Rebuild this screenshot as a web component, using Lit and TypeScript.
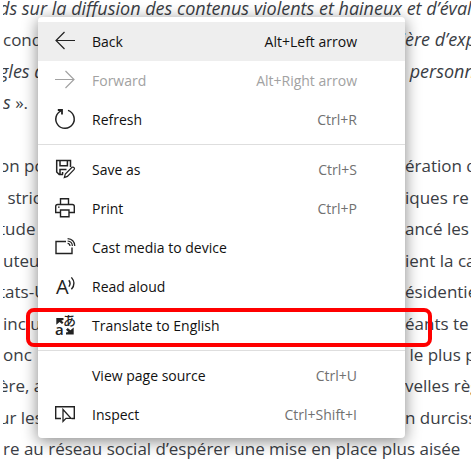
import { LitElement, html, css, svg, nothing } from "lit";
import { customElement } from "lit/decorators.js";
import { classMap } from "lit/directives/class-map.js";

const icons = {
  back: svg`<path d="M20 9.5H1M9.5 1L1 9.5L9.5 18"/>`,
  forward: svg`<path d="M0 9.5H19M10.5 1L19 9.5L10.5 18"/>`,
  refresh: svg`<path d="M13 1.4A9.2 9.2 0 1 1 6.5 1.6" stroke-width="1.5"/><path d="M2.8 1H7V5.4" stroke-width="1.8"/>`,
  save: svg`<path d="M8 15.5H4.2L1.7 13V1.5H15.5V8M5 1.5V6.8H12.4V1.5M5 15.5V10.6H11.5M7.6 15.5V13" stroke-width="1.5"/>
    <path d="M9.3 18.6L10.3 15L17 8.3Q18.2 7.6 19.1 8.6Q20 9.6 19 10.7L12.4 17.4Z"/>`,
  print: svg`<path d="M5.5 6.5V.7H13.5V6.5M5.5 14.5H.7V8.5Q.7 6.5 2.7 6.5H17.3Q19.3 6.5 19.3 8.5V14.5H14M5.5 12H14V18.8H5.5Z" stroke-width="1.4"/><path d="M3 9.2H4.6"/>`,
  cast: svg`<path d="M11 4.5H1V16.5H17V10.5" stroke-width="1.4"/>
    <path d="M12.6 6.4Q14.8 6.6 15 9M12.6 4Q17.2 4.4 17.4 9M12.6 1.6Q19.4 2 19.8 9"/>`,
  read: svg`<text class="letter" x="1" y="18" font-size="20">A</text>
    <path d="M13.8 4.2Q16.4 7.4 13.8 10.6M16.4 1.4Q21.6 7.4 16.4 13.2" stroke-width="1.4"/>`,
  translate: svg`<text class="kana" x="8" y="10" font-size="13">あ</text>
    <text class="letter bold" x="0" y="20" font-size="15">a</text>
    <path class="solid" d="M1.3 3H8.5V5L6.4 5.4L8.5 7.4L7 9L4.6 7L1.3 9.8ZM18.7 19.6H11V17.6L13.4 17L11 14.7L12.8 12.9L15.4 15.2L18.7 12.4Z"/>`,
  inspect: svg`<path d="M6 14.5H.7V2.7H19.3V14.5H16.5" stroke-width="1.4"/><path d="M8 5.5V17.5L11 14.4H16Z" stroke-width="1.3"/>`,
};

interface Command {
  label: string;
  keys?: string;
  icon?: keyof typeof icons;
  active?: boolean;
  disabled?: boolean;
  marked?: boolean;
}

const groups: Command[][] = [
  [
    { label: "Back", keys: "Alt+Left arrow", icon: "back", active: true },
    { label: "Forward", keys: "Alt+Right arrow", icon: "forward", disabled: true },
    { label: "Refresh", keys: "Ctrl+R", icon: "refresh" },
  ],
  [
    { label: "Save as", keys: "Ctrl+S", icon: "save" },
    { label: "Print", keys: "Ctrl+P", icon: "print" },
    { label: "Cast media to device", icon: "cast" },
    { label: "Read aloud", icon: "read" },
    { label: "Translate to English", icon: "translate", marked: true },
  ],
  [
    { label: "View page source", keys: "Ctrl+U" },
    { label: "Inspect", keys: "Ctrl+Shift+I", icon: "inspect" },
  ],
];

// Each visible line: its start, the letters that run under the menu's right edge, and its end.
// A quoted start or end is set in italics.
interface Line {
  start: string;
  after?: string;
  under?: string;
  end?: string;
  quoteStart?: boolean;
  quoteEnd?: boolean;
  cut?: boolean;
}

const lines: Line[] = [
  { start: "ds sur la diffusion des contenus violents et haineux et d’évalu", quoteStart: true, cut: true },
  { start: "cond", under: "i", end: "ère d’exp", quoteEnd: true },
  { start: "gles d", under: "s", end: " personn", quoteStart: true, quoteEnd: true, cut: true },
  { start: "s", after: " ».", quoteStart: true },
  { start: "\u00a0" },
  { start: "on po", end: "ération d", cut: true },
  { start: " stric", under: "r", end: "iques re" },
  { start: "tude", end: "ancé les", cut: true },
  { start: "uteu", end: "ient la ca" },
  { start: "tats-U", end: "ésidentie", cut: true },
  { start: "inclu", under: "g", end: "éants te" },
  { start: "onc", end: " le plus p" },
  { start: "ère, a", end: "velles règ", cut: true },
  { start: "ur les", end: "n durciss", cut: true },
  { start: "re au réseau social d’espérer une mise en place plus aisée" },
];

@customElement("context-menu")
class ContextMenu extends LitElement {
  static styles = css`
    :host {
      display: block;
      box-sizing: border-box;
      padding: 5px 0 4px;
      border-radius: 4px;
      background: #fff;
      box-shadow: 0 3px 16px rgba(0, 0, 0, 0.48);
      font: 14px/20px "Open Sans", "Noto Sans", sans-serif;
      color: #111;
    }
    .group + .group {
      margin-top: 5px;
      padding-top: 5px;
      border-top: 1px solid #dedede;
    }
    .item {
      position: relative;
      box-sizing: border-box;
      display: flex;
      align-items: center;
      width: 100%;
      height: 39px;
      padding: 0 48px 0 17px;
      border: 0;
      background: none;
      color: inherit;
      font: inherit;
      text-align: left;
    }
    .active {
      background: #eee;
    }
    .icon {
      flex: none;
      width: 21px;
      height: 21px;
      margin-right: 16px;
      overflow: visible;
      fill: none;
      stroke: #222;
      stroke-width: 1.2;
    }
    .label {
      flex: 1;
    }
    .keys {
      color: #717171;
    }
    .active .keys {
      color: #111;
    }
    .disabled,
    .disabled .keys {
      color: #a2a2a2;
    }
    .disabled .icon {
      stroke: #a2a2a2;
    }
    .letter,
    .kana,
    .solid {
      fill: #222;
      stroke: none;
    }
    .letter {
      font-family: "Open Sans", sans-serif;
    }
    .bold {
      font-weight: 600;
    }
    .kana {
      font-family: "Noto Sans CJK JP", sans-serif;
      font-weight: 500;
    }
    .marker {
      position: absolute;
      inset: 2px -27px -2px -12px;
      border: 4px solid #f00;
      border-radius: 8px;
      pointer-events: none;
    }
  `;

  private item(c: Command) {
    return html`<button
      class=${classMap({ item: true, active: !!c.active, disabled: !!c.disabled })}
      role="menuitem"
      ?disabled=${c.disabled}
    >
      <svg class="icon" viewBox="0 0 21 21" aria-hidden="true">${c.icon ? icons[c.icon] : nothing}</svg>
      <span class="label">${c.label}</span>
      ${c.keys ? html`<span class="keys">${c.keys}</span>` : nothing}
      ${c.marked ? html`<span class="marker"></span>` : nothing}
    </button>`;
  }

  render() {
    return html`<div role="menu">
      ${groups.map((g) => html`<div class="group" role="group">${g.map((c) => this.item(c))}</div>`)}
    </div>`;
  }
}

@customElement("app-root")
class AppRoot extends LitElement {
  static styles = css`
    :host {
      display: block;
      position: relative;
      min-height: 100vh;
      overflow: hidden;
      background: #fff;
    }
    .article {
      height: 100vh;
      margin-left: 3px;
      overflow: hidden;
      font: 17px/1.85em "Open Sans", "Noto Sans", sans-serif;
      color: #3a3d44;
    }
    .line {
      display: grid;
      grid-template-columns: 36px 366px 1fr;
      white-space: pre;
      margin: 0;
    }
    .first {
      margin-top: -7px;
    }
    .quote {
      font-style: italic;
      font-size: 18px;
    }
    .cut {
      text-indent: -4px;
    }
    .under {
      text-align: right;
    }
    .under,
    .end {
      text-indent: 0;
    }
    .menu {
      position: absolute;
      top: 17px;
      left: 38px;
      width: 367px;
    }
  `;

  private line(l: Line, i: number) {
    const start = l.quoteStart ? html`<i class="quote">${l.start}</i>` : l.start;
    const end = l.end ?? "";
    return html`<p class=${classMap({ line: true, first: i === 0, cut: !!l.cut })}><span
      >${start}${l.after ?? ""}</span><span class=${classMap({ under: true, quote: !!l.quoteEnd })}>${l.under ?? ""}</span><span
      class=${classMap({ end: true, quote: !!l.quoteEnd })}>${end}</span></p>`;
  }

  render() {
    return html`
      <main class="article">${lines.map((l, i) => this.line(l, i))}</main>
      <context-menu class="menu"></context-menu>
    `;
  }
}
